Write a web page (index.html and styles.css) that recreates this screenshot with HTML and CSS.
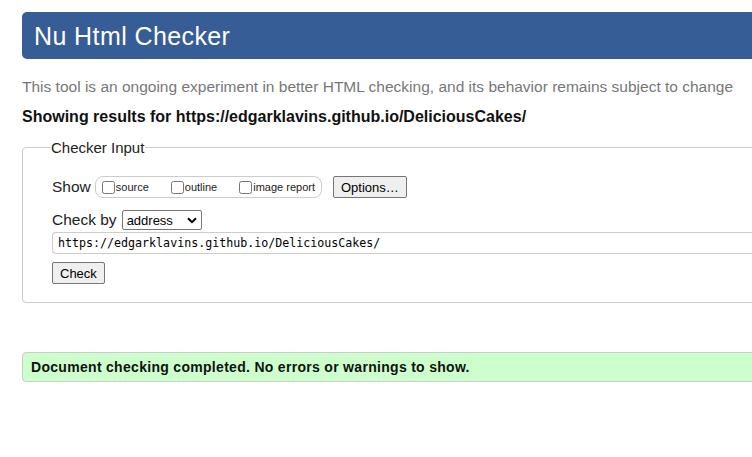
FILE: index.html
```html
<!DOCTYPE html>
<html lang="en">
<head>
<meta charset="utf-8">
<title>Nu Html Checker</title>
<link rel="stylesheet" href="styles.css">
</head>
<body>
<div class="page">
  <h1 class="banner">Nu Html Checker</h1>
  <p class="intro">This tool is an ongoing experiment in better HTML checking, and its behavior remains subject to change</p>
  <p class="results">Showing results for https://edgarklavins.github.io/DeliciousCakes/</p>
  <fieldset class="input-box">
    <legend class="input-legend">Checker Input</legend>
    <div class="row show-row">
      <span class="row-label">Show</span>
      <fieldset class="options-pill">
        <label class="opt"><input type="checkbox" class="cb">source</label>
        <label class="opt"><input type="checkbox" class="cb">outline</label>
        <label class="opt"><input type="checkbox" class="cb">image report</label>
      </fieldset>
      <button class="btn options-btn" type="button">Options…</button>
    </div>
    <div class="row by-row">
      <span class="row-label">Check by</span>
      <span class="select">address<svg class="chev" width="10" height="7" viewBox="0 0 10 7"><path d="M1 1.2 L5 5.2 L9 1.2" fill="none" stroke="#000" stroke-width="2"/></svg></span>
    </div>
    <div class="url">https://edgarklavins.github.io/DeliciousCakes/</div>
    <div class="row"><button class="btn check-btn" type="button">Check</button></div>
  </fieldset>
  <div class="success">Document checking completed. No errors or warnings to show.</div>
</div>
</body>
</html>
```
FILE: styles.css
```css
html, body {
  margin: 0;
  padding: 0;
  overflow: hidden;
  background: #fff;
}
body {
  font-family: "Liberation Sans", Arial, sans-serif;
  color: #222;
}
.page {
  width: 900px;
  padding: 12px 0 0 22px;
}
.banner {
  margin: 0;
  height: 47px;
  background: #365d95;
  color: #fff;
  font-weight: normal;
  font-size: 25px;
  letter-spacing: 0.4px;
  line-height: 48px;
  padding-left: 12px;
  border-radius: 5px 0 0 5px;
}
.intro {
  margin: 18px 0 0;
  font-size: 15.5px;
  line-height: 20px;
  color: #777;
}
.results {
  margin: 10px 0 0;
  font-size: 16px;
  line-height: 20px;
  font-weight: bold;
  color: #111;
}
.input-box {
  margin: 12px 0 0;
  border: 1px solid #ccc;
  border-radius: 4px;
  padding: 6px 0 18px 29px;
  min-width: 0;
}
.input-legend {
  font-size: 15px;
  color: #222;
  padding: 0 1px;
  margin-left: -2px;
}
.row {
  display: flex;
  align-items: center;
}
.show-row {
  margin-top: 14px;
}
.row-label {
  font-size: 15.5px;
  color: #222;
  margin-right: 4px;
}
.options-pill {
  display: flex;
  align-items: center;
  margin: 0;
  padding: 0 6px 0 2px;
  height: 20px;
  border: 1px solid #ccc;
  border-radius: 8px;
  font-size: 11px;
}
.opt {
  display: flex;
  align-items: center;
  margin-right: 18px;
}
.opt:last-child { margin-right: 0; }
.cb {
  width: 13px;
  height: 13px;
  margin: 0 1px 0 4px;
}
.btn {
  font-family: "Liberation Sans", Arial, sans-serif;
  font-size: 13px;
  color: #000;
  background: #efefef;
  border: 1px solid #767676;
  border-radius: 2px;
  height: 22px;
  padding: 0 7px;
}
.options-btn {
  margin-left: 11px;
}
.by-row {
  margin-top: 12px;
}
.select {
  display: inline-flex;
  align-items: center;
  justify-content: space-between;
  width: 80px;
  height: 20px;
  box-sizing: border-box;
  border: 1px solid #767676;
  border-radius: 2px;
  padding: 0 4px 0 4px;
  font-size: 13px;
  color: #000;
  margin-left: 1px;
}
.url {
  margin-top: 2px;
  height: 22px;
  box-sizing: border-box;
  border: 1px solid #ccc;
  border-right: 0;
  border-radius: 4px 0 0 4px;
  font-family: "DejaVu Sans Mono", monospace;
  font-size: 11.65px;
  line-height: 20px;
  padding-left: 5px;
  color: #000;
}
.row .check-btn {
  margin-top: 8px;
}
.success {
  margin-top: 49px;
  height: 30px;
  box-sizing: border-box;
  background: #ccffcc;
  border: 1px solid #ccc;
  border-radius: 4px;
  font-size: 14px;
  font-weight: bold;
  letter-spacing: 0.3px;
  line-height: 28px;
  padding-left: 8px;
  color: #111;
}
```
